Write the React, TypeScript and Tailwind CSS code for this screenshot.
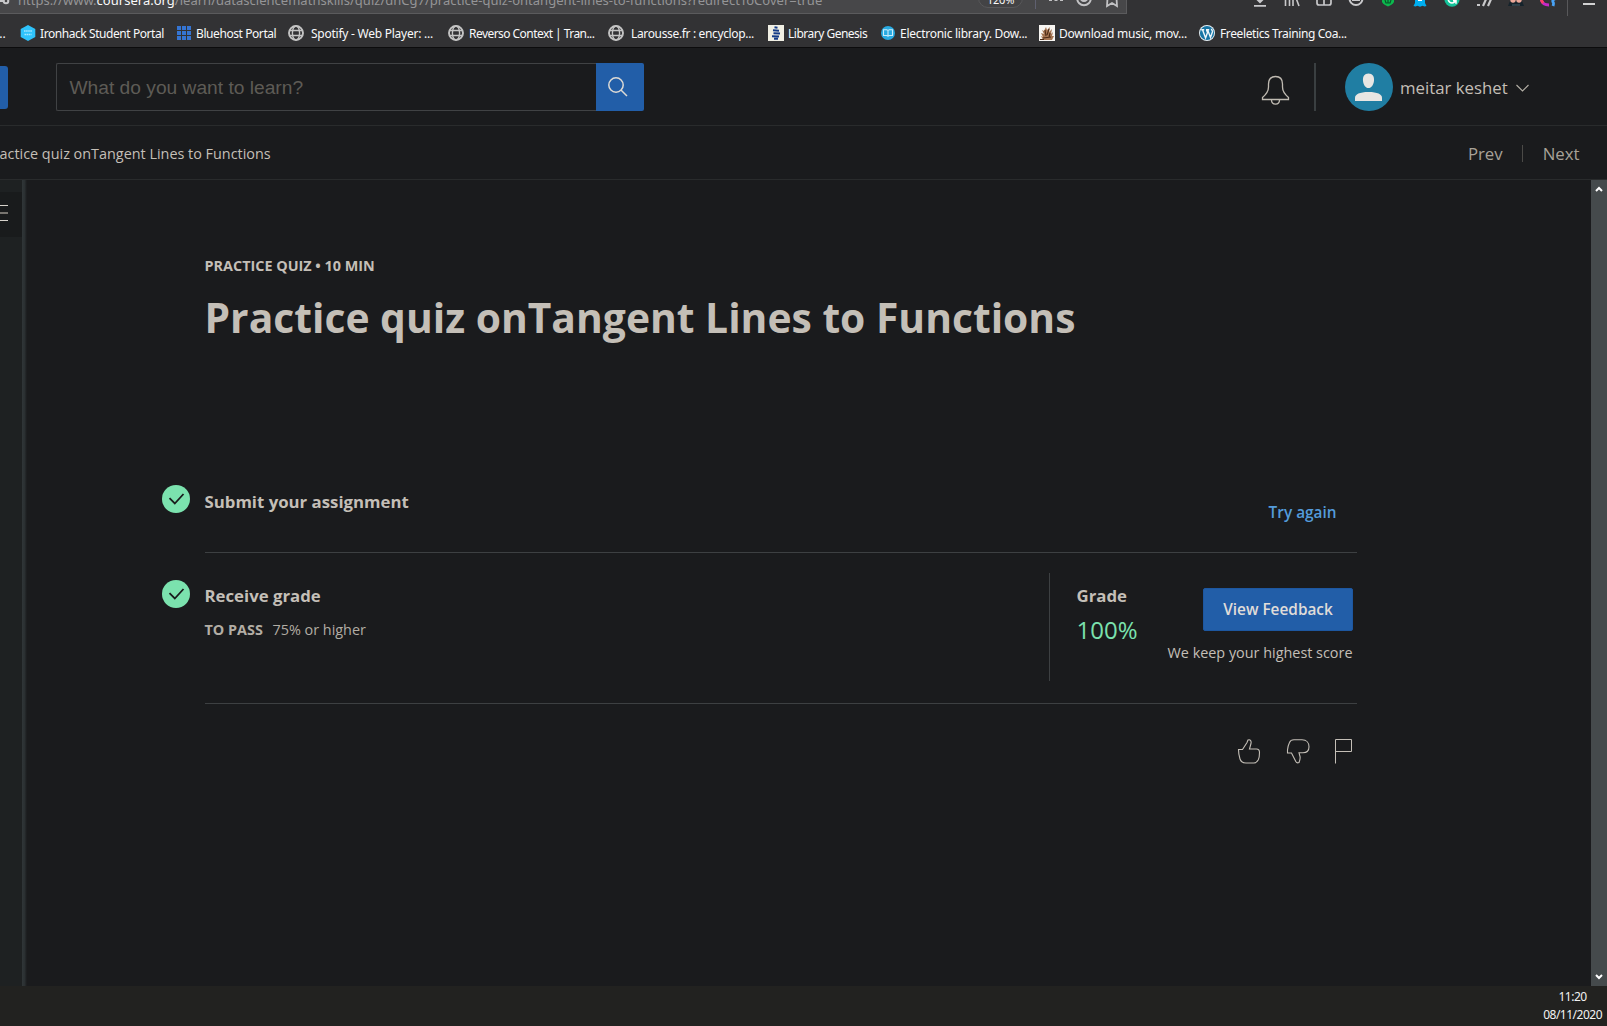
import type { ReactNode } from 'react';

function Globe() {
  return (
    <svg width="16" height="16" viewBox="0 0 16 16" fill="none" stroke="#c4c4c4" strokeWidth="1.4">
      <circle cx="8" cy="8" r="7" strokeWidth="1.9" />
      <ellipse cx="8" cy="8" rx="3.6" ry="7" />
      <path d="M1.6 5.5h12.8M1.6 10.5h12.8" />
    </svg>
  );
}

function Hexagon() {
  return (
    <svg width="16" height="16" viewBox="0 0 16 16">
      <path d="M8 0l7.3 4v8L8 16 .7 12V4z" fill="#2fc3fb" />
      <path d="M4 6h8M4.500 9.500h7" stroke="#a5e6ff" strokeWidth="1.700" strokeDasharray="1.6 .5" />
    </svg>
  );
}

function Squares() {
  return (
    <svg width="14" height="14" viewBox="0 0 14 14" fill="#3575d3" shapeRendering="crispEdges">
      {[0, 5, 10].map((x) => [0, 5, 10].map((y) => <rect key={`${x}-${y}`} x={x} y={y} width="4" height="4" />))}
    </svg>
  );
}

function Genesis() {
  return (
    <svg width="16" height="16" viewBox="0 0 16 16">
      <path d="M0 0h16v16H0z" fill="#f0efe4" />
      <path d="M6.500 2.300l3 .4M5 5.200l6 .5M5.500 8.200l6.500 .3M4 11.200l7 .3M6 13.800h4" stroke="#123a86" strokeWidth="2.100" />
    </svg>
  );
}

function OpenBook() {
  return (
    <svg width="16" height="16" viewBox="0 0 16 16">
      <circle cx="8" cy="8" r="7" fill="#28aae1" />
      <path d="M8 5.2v6M3.5 4.8h3.2L8 5.5l1.3-.7h3.2v5.7H9.3L8 11.2l-1.3-.7H3.5z" fill="none" stroke="#c9ecfa" strokeWidth="1.1" />
    </svg>
  );
}

function Ship() {
  return (
    <svg width="16" height="16" viewBox="0 0 16 16">
      <path d="M0 0h16v16H0z" fill="#f7f5f2" />
      <path d="M2 11l2 4h9l2-4-2 0 1-4-2 2 1-5-3 3 1-5-3 3-1-3-2 4-2-1 2 4-3-1 2 4z" fill="#a57452" />
      <path d="M4 13l8-1M6 5l1 6M10 4l-2 6M11 8l-1 4M1 14.500h4" stroke="#4d2c17" strokeWidth="1.100" />
    </svg>
  );
}

function WordPress() {
  return (
    <svg width="16" height="16" viewBox="0 0 16 16" fill="none">
      <circle cx="8" cy="8" r="8" fill="#e8f2f7" />
      <circle cx="8" cy="8" r="7.1" fill="#1775a5" />
      <path d="M2.2 4.7h3M7 4.7h3.2M3.6 4.9l3 8 1.9-5.3-1-2.700M8.700 4.900l2.800 7.600 1.900-5.500c.3-1.200-.9-2-1-3.200" stroke="#eef6fa" strokeWidth="1.4" />
    </svg>
  );
}

type Bookmark = { label: string; icon: ReactNode; box: string; text: string };

const bookmarks: Bookmark[] = [
  { label: 'Ironhack Student Portal', icon: <Hexagon />, box: 'w-[157px] gap-1', text: 'tracking-[-0.43px]' },
  { label: 'Bluehost Portal', icon: <Squares />, box: 'w-[111px] gap-[5px]', text: 'tracking-[-0.42px]' },
  { label: 'Spotify - Web Player: ...', icon: <Globe />, box: 'w-[160px] gap-[7px]', text: 'tracking-[-0.25px]' },
  { label: 'Reverso Context | Tran...', icon: <Globe />, box: 'w-[160px] gap-[5px]', text: 'tracking-[-0.55px]' },
  { label: 'Larousse.fr : encyclop...', icon: <Globe />, box: 'w-[160px] gap-[7px]', text: 'tracking-[-0.35px]' },
  { label: 'Library Genesis', icon: <Genesis />, box: 'w-[112px] gap-1', text: 'tracking-[-0.5px]' },
  { label: 'Electronic library. Dow...', icon: <OpenBook />, box: 'w-[159px] gap-1', text: 'tracking-[-0.27px]' },
  { label: 'Download music, mov...', icon: <Ship />, box: 'w-[160px] gap-1', text: 'tracking-[-0.24px]' },
  { label: 'Freeletics Training Coa...', icon: <WordPress />, box: 'w-[160px] gap-[5px]', text: 'tracking-[-0.39px]' },
];

function ToolbarIcons() {
  return (
    <div className="flex h-4 items-start pl-[125px]">
      <div className="flex gap-4">
        <svg width="16" height="8" viewBox="0 0 16 8" fill="#c8c8ca"><path d="M3.500-1h9L8 3.500zM2 5h12v1.700H2z" /></svg>
        <svg width="16" height="8" viewBox="0 0 16 8" stroke="#c8c8ca" strokeWidth="1.600"><path d="M1.500-1v7M5.500-1v7M9-1v7M12-2l3 8" /></svg>
        <svg width="16" height="8" viewBox="0 0 16 8" fill="none" stroke="#c8c8ca" strokeWidth="1.700"><path d="M1-3v6q0 2 2 2h10q2 0 2-2v-6M8-2v7" /></svg>
        <svg width="16" height="8" viewBox="0 0 16 8" fill="none" stroke="#c8c8ca" strokeWidth="2"><circle cx="8" cy="-1.500" r="6.500" /><path d="M4 0h8" /></svg>
        <svg width="16" height="8" viewBox="0 0 16 8"><path d="M2-2v4q1 2 3 3l3 1.500 3-1.500q2-1 3-3v-4z" fill="#0cb84d" /><path d="M5 0l1 3h4l1-3M8 0v3" stroke="#07562a" strokeWidth="1.200" fill="none" /></svg>
        <svg width="16" height="8" viewBox="0 0 16 8"><path d="M3-2h10v5l1.500 3-2 .5-2-.7-2.500 1-2.500-1-2 .7-2-.5L3 3z" fill="#00aef0" /><path d="M6 0h4" stroke="#fff" strokeWidth="2" /></svg>
        <svg width="16" height="8" viewBox="0 0 16 8"><circle cx="8" cy="-.8" r="7.600" fill="#15c39a" /><path d="M4-1q1 4 4 4t4-4M9 .8h3v3" stroke="#fff" strokeWidth="1.500" fill="none" /></svg>
        <svg width="16" height="8" viewBox="0 0 16 8" stroke="#c8c8ca" strokeWidth="2.200"><path d="M7 6l4-9M12 6l4-9M1 5h3" /></svg>
        <svg width="16" height="8" viewBox="0 0 16 8"><path d="M2 1L0 6h16l-2-5z" fill="#15232b" /><circle cx="5" cy="0" r="2.700" fill="#eba798" /><circle cx="11" cy="0" r="2.700" fill="#eba798" /><path d="M4 5h8" stroke="#46606d" /></svg>
        <svg width="16" height="8" viewBox="0 0 16 8" fill="none" strokeWidth="2.800"><path d="M1-2q.5 7 8 7" stroke="#c627c7" /><path d="M1.200-2q0 3 2 5" stroke="#ff3f65" /><path d="M15-1q-3 1-2 3 1 1 0 4" stroke="#48a2f5" /></svg>
      </div>
      <div className="ml-[11px] h-4 w-px bg-[#58585a]" />
      <div className="mt-[3px] ml-[15px] h-0.5 w-3 bg-[#d2d2d3]" />
    </div>
  );
}

function BrowserChrome() {
  return (
    <header className="flex h-12 shrink-0 flex-col overflow-hidden border-b border-[#0c0c0d] bg-[#323234]">
      <div className="flex h-4">
        <div className="flex h-3.5 w-[1127px] shrink-0 overflow-hidden border-r border-b border-[#5b5b5d] bg-[#474749]">
          <svg className="shrink-0" width="18" height="8" viewBox="0 0 18 8" fill="none" stroke="#c8c8ca" strokeWidth="2"><path d="M0 1h3" /><circle cx="6" cy="1" r="2.300" /></svg>
          <div className="-mt-[10px] w-[960px] font-['Noto_Sans'] text-[13px] leading-5 tracking-[0.015px] whitespace-nowrap text-[#959597]">
            https://www.<span className="text-[#f9f9fa]">coursera.org</span>/learn/datasciencemathskills/quiz/dnCg7/practice-quiz-ontangent-lines-to-functions?redirectToCover=true
          </div>
          <div className="-mt-3 h-5 w-[45px] shrink-0 rounded-full border border-[#58585a] bg-[#434345] text-center font-['Noto_Sans'] text-[11px] leading-[22px] tracking-[-0.2px] text-[#f9f9fa]">120%</div>
          <div className="ml-3 h-[9px] w-px bg-[#5f6070]" />
          <svg className="ml-[13px] shrink-0" width="74" height="9" viewBox="0 0 74 9" fill="none" stroke="#c2c2c4" strokeWidth="2">
            <path d="M0 0h3M5.500 0h3M11 0h3" />
            <circle cx="35" cy="-1.500" r="6.800" />
            <path d="M32-.5q3 3 6 0" />
            <path d="M58.500-2L58 6l5-3 5 3-.5-8" strokeWidth="1.800" />
          </svg>
        </div>
        <ToolbarIcons />
      </div>
      <nav className="flex h-[31px] items-center pt-[3px] font-['Noto_Sans'] text-[12px] leading-4 whitespace-nowrap text-[#f9f9fa]">
        <span className="w-5 shrink-0 pt-0.5 -indent-1">...</span>
        {bookmarks.map((b) => (
          <a key={b.label} className={`flex shrink-0 items-center ${b.box}`}>
            <span className="shrink-0">{b.icon}</span>
            <span className={`mt-0.5 ${b.text}`}>{b.label}</span>
          </a>
        ))}
      </nav>
    </header>
  );
}

function SiteHeader() {
  return (
    <div className="flex h-[78px] shrink-0 items-start border-b border-[#292b2c] pt-[15px]">
      <div className="mt-[3px] h-[43px] w-2 rounded-r-[3px] bg-[#225ea8]" />
      <div className="ml-12 flex h-12 w-[588px]">
        <div className="h-12 w-[540px] shrink-0 rounded-l-[2px] border border-r-0 border-[#404244] pl-[12.5px] font-['Liberation_Sans'] text-[19.2px] leading-[47px] text-[#5e5b56]">
          What do you want to learn?
        </div>
        <button className="flex h-12 w-12 rounded-r-[2px] bg-[#225ea8] pt-3.5 pl-[11px]">
          <svg width="22" height="22" viewBox="0 0 22 22" fill="none" stroke="#dddad5" strokeWidth="1.500">
            <circle cx="9" cy="8" r="7.200" />
            <path d="M14 13l6 6" />
          </svg>
        </button>
      </div>
      <svg className="mt-3 ml-[617px]" width="29" height="31" viewBox="0 0 29 31" fill="none" stroke="#c0bbb2" strokeWidth="1.300">
        <path d="M1.500 24.500v-2C5 19.500 7.500 17 7.500 12V9C7.500 4.500 10 1.500 14.500 1.500S21.500 4.500 21.500 9v3c0 5 2.500 7.500 6 10.500v2z" />
        <path d="M10.500 25c0 5.500 8 5.500 8 0" />
      </svg>
      <div className="ml-6 h-12 w-0.5 bg-[#3a3f41]" />
      <svg className="ml-[29px]" width="48" height="48" viewBox="0 0 48 48">
        <circle cx="24" cy="24" r="24" fill="#207ea3" />
        <path d="M23.500 10.500c4 0 6 3 5.500 7.200-.4 4-2.500 7.300-5.500 7.300s-5.200-3.300-5.500-7.300c-.4-4.200 1.500-7.200 5.500-7.200z" fill="#e8e6e3" />
        <path d="M10 38v-3.200c0-3.500 4.500-5.800 13.500-5.800S37 31.300 37 34.800V38z" fill="#e8e6e3" />
      </svg>
      <span className="mt-[13px] ml-[7px] w-[109px] text-[16.8px] leading-6 whitespace-nowrap text-[#c4bfb7]">meitar keshet</span>
      <svg className="mt-[21px] ml-[7px]" width="13" height="8" viewBox="0 0 13 8" fill="none" stroke="#b5b0a7" strokeWidth="1.100">
        <path d="M.5 1l6 6 6-6" />
      </svg>
    </div>
  );
}

function Breadcrumbs() {
  return (
    <div className="flex h-[54px] shrink-0 items-start border-b border-[#292b2c] whitespace-nowrap">
      <span className="mt-[18px] -ml-[0.5px] text-[14.4px] leading-5 text-[#c4bfb7]">actice quiz onTangent Lines to Functions</span>
      <div className="ml-auto flex pr-[27.500px] text-[16.8px] leading-6 text-[#a8a298]">
        <span className="mt-4">Prev</span>
        <span className="mt-[19px] mr-5 ml-[19px] h-[17px] w-px bg-[#4b4a47]" />
        <span className="mt-4">Next</span>
      </div>
    </div>
  );
}

function CheckBadge({ className }: { className: string }) {
  return (
    <svg className={`mr-[15px] -ml-[43px] shrink-0 ${className}`} width="28" height="28" viewBox="0 0 28 28" fill="none">
      <circle cx="14" cy="14" r="14" fill="#7be2ae" />
      <path d="M7.500 13.200l5.300 5.300 8.700-9.500" stroke="#191b1c" strokeWidth="1.800" />
    </svg>
  );
}

function QuizContent() {
  return (
    <main className="flex w-[1152px] flex-col pt-[76px] text-[#c4bfb7]">
      <p className="-ml-[0.5px] text-[14.4px] leading-5 font-bold">PRACTICE QUIZ • 10 MIN</p>
      <h1 className="mt-[17px] -ml-[0.5px] text-[40.8px] leading-[48px] font-bold whitespace-nowrap">Practice quiz onTangent Lines to Functions</h1>

      <section className="mt-[144px] flex h-[68px] items-start border-b border-[#3d4042]">
        <CheckBadge className="" />
        <h2 className="mt-[5px] -ml-[0.5px] text-[16.8px] leading-6 font-bold">Submit your assignment</h2>
        <a className="mt-[18px] mr-[20.5px] ml-auto text-[15.360px] leading-5 font-semibold text-[#549bdb]">Try again</a>
      </section>

      <section className="flex h-[151px] items-start border-b border-[#3d4042]">
        <CheckBadge className="mt-[27px]" />
        <div className="mt-[31px] -ml-[0.5px]">
          <h2 className="text-[16.8px] leading-6 font-bold">Receive grade</h2>
          <p className="mt-3 text-[14.4px] leading-5 text-[#b2ada4]">
            <span className="mr-[9.6px] font-bold">TO PASS</span>75% or higher
          </p>
        </div>
        <div className="mt-5 ml-auto flex h-[108px] w-[308px] border-l border-[#3d4042] pr-1 pl-[26.500px]">
          <div className="mt-[11px] whitespace-nowrap">
            <h2 className="text-[16.8px] leading-6 font-bold">Grade</h2>
            <p className="mt-[6px] text-[24px] leading-8 text-[#7be2ae]">100%</p>
          </div>
          <div className="mt-[15px] ml-auto flex flex-col items-end whitespace-nowrap">
            <button className="h-[43px] w-[150px] rounded-[2px] border border-[#1d57a0] bg-[#225ea8] text-[15.360px] leading-[41px] font-semibold text-[#e0ddd9]">View Feedback</button>
            <p className="mt-3 mr-[0.5px] text-[14.4px] leading-5">We keep your highest score</p>
          </div>
        </div>
      </section>

      <div className="mt-[35px] flex justify-end pr-[5px]">
        <svg width="24" height="25" viewBox="0 0 24 25" fill="none" stroke="#c4bfb7" strokeWidth="1.100">
          <path d="M1.500 10.500h4l4.500-7 1-2.500c2.500-.8 3.500 1.200 3 3.500l-1.500 5.500h7c2 0 3 1.500 3 3.500 0 2.500 0 5-1.200 7.300-1 1.800-2.300 3.200-4.300 3.200H9c-3 0-5-1-6-4-.8-2.500-1.500-6-1.500-9.500z" />
        </svg>
        <svg className="mr-6 ml-[25px]" width="24" height="25" viewBox="0 0 24 25" fill="none" stroke="#c4bfb7" strokeWidth="1.100">
          <path d="M1.500 14V11c.3-3 1-5.500 2-7.500C4.300 1.500 6 .8 8 .8h8c4.500 0 7 3 7 7 0 4-2.500 6-6 6h-4l1 3.700c.5 2-.2 4-1 6-1.500.8-2.500.3-3.200-1L5.500 14z" />
        </svg>
        <svg width="18" height="25" viewBox="0 0 18 25" fill="none" stroke="#c4bfb7" strokeWidth="1">
          <path d="M1.500 24.500V.5h16v12h-16" />
        </svg>
      </div>
    </main>
  );
}

export default function App() {
  return (
    <div className="flex h-[1026px] w-[1607px] flex-col overflow-hidden bg-[#1a1b1d] font-['Open_Sans']">
      <BrowserChrome />
      <SiteHeader />
      <Breadcrumbs />
      <div className="flex min-h-0 flex-1">
        <aside className="w-[22px] bg-[#1e2122] pt-3">
          <div className="flex h-[45px] flex-col bg-[#191b1c] pt-[13px]">
            <span className="h-px w-2 bg-[#d6d2cb]" />
            <span className="mt-1.5 h-0.5 w-2 bg-[#77746f]" />
            <span className="mt-1.5 h-px w-2 bg-[#d6d2cb]" />
          </div>
        </aside>
        <div className="w-[5px] bg-linear-to-r from-[#303638] via-[#2b3032] to-[#1a1b1d]" />
        <div className="flex flex-1 pl-[178px]">
          <QuizContent />
        </div>
        <div className="flex w-4 flex-col items-center justify-between bg-[#454a4c] pt-1.5 pb-1.5">
          <svg width="8" height="6" viewBox="0 0 8 6" fill="none" stroke="#fff" strokeWidth="2"><path d="M1 5l3-3 3 3" /></svg>
          <svg width="8" height="6" viewBox="0 0 8 6" fill="none" stroke="#fff" strokeWidth="2"><path d="M1 1l3 3 3-3" /></svg>
        </div>
      </div>
      <footer className="flex h-10 shrink-0 justify-end bg-[#222220] pt-[2px] pr-[5px] text-center font-['Noto_Sans'] text-[12px] leading-[18px] tracking-[-0.5px] text-[#f2f2f2]">
        <div>
          <div>11:20</div>
          <div>08/11/2020</div>
        </div>
      </footer>
    </div>
  );
}
